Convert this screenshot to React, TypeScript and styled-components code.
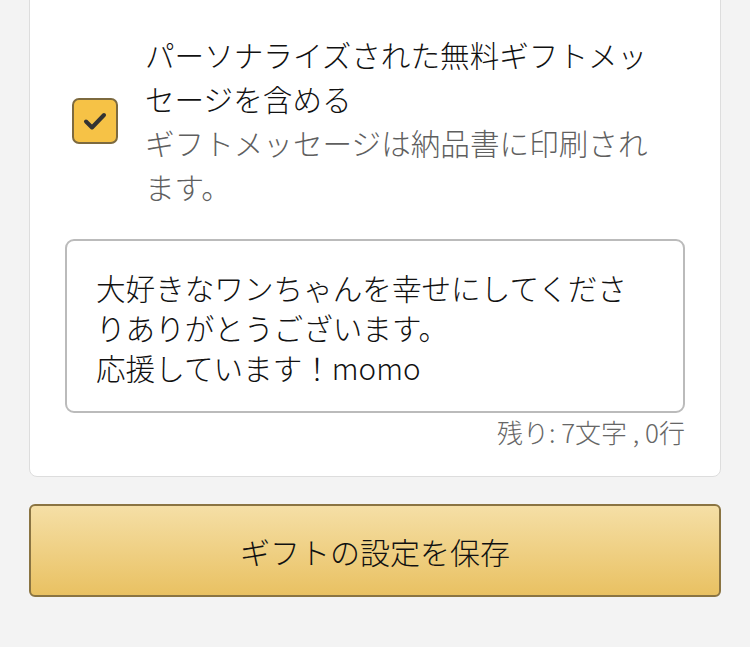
import styled, { createGlobalStyle } from 'styled-components';

const GlobalStyle = createGlobalStyle`
  body {
    margin: 0;
    background: #f3f3f3;
    font-family: 'Noto Sans CJK JP', 'Noto Sans', sans-serif;
  }
`;

const Page = styled.div`
  padding: 0 29px;
  width: 750px;
  box-sizing: border-box;
`;

const Card = styled.div`
  margin-top: -10px;
  background: #ffffff;
  border: 1px solid #dddddd;
  border-radius: 8px;
  padding: 42px 35px 25px 35px;
`;

const OptionRow = styled.label`
  display: flex;
  align-items: center;
  gap: 27px;
  padding-left: 7px;
  padding-right: 30px;
`;

const Box = styled.span<{ $checked: boolean }>`
  flex: none;
  width: 46px;
  height: 46px;
  box-sizing: border-box;
  border-radius: 7px;
  border: 2px solid #7d6a3f;
  background: ${(p) => (p.$checked ? '#f6c246' : '#ffffff')};
  display: flex;
  align-items: center;
  justify-content: center;
`;

const OptionText = styled.div`
  font-size: 29.6px;
  font-weight: 300;
  line-height: 44px;
  color: #111111;
`;

const Note = styled.div`
  color: #5f5f5f;
`;

const Message = styled.textarea`
  display: block;
  margin-top: 30px;
  width: 100%;
  height: 174px;
  box-sizing: border-box;
  border: 2px solid #bbbbbb;
  border-radius: 9px;
  padding: 27px 30px 20px 29px;
  font-family: inherit;
  font-size: 29.6px;
  font-weight: 300;
  line-height: 40px;
  color: #111111;
  resize: none;
  outline: none;
  overflow: hidden;
`;

const Counter = styled.div`
  text-align: right;
  font-size: 26px;
  font-weight: 300;
  line-height: 38px;
  color: #666666;
`;

const SaveButton = styled.button`
  display: block;
  margin-top: 27px;
  width: 100%;
  height: 93px;
  border: 2px solid #8a7442;
  border-radius: 6px;
  background: linear-gradient(to bottom, #f5dfa6, #e9c162);
  font-family: inherit;
  font-size: 30px;
  font-weight: 300;
  color: #111111;
  cursor: pointer;
`;

const message = '大好きなワンちゃんを幸せにしてくださりありがとうございます。\n応援しています！momo';

export default function App() {
  return (
    <>
      <GlobalStyle />
      <Page>
        <Card>
          <OptionRow>
            <Box $checked>
              <svg width="26" height="26" viewBox="0 0 26 26">
                <path d="M4 13.5 L10 19.5 L22 7" fill="none" stroke="#333333" strokeWidth="4" strokeLinecap="round" strokeLinejoin="round" />
              </svg>
            </Box>
            <OptionText>
              パーソナライズされた無料ギフトメッセージを含める
              <Note>ギフトメッセージは納品書に印刷されます。</Note>
            </OptionText>
          </OptionRow>
          <Message readOnly defaultValue={message} />
          <Counter>残り: 7文字 , 0行</Counter>
        </Card>
        <SaveButton>ギフトの設定を保存</SaveButton>
      </Page>
    </>
  );
}
